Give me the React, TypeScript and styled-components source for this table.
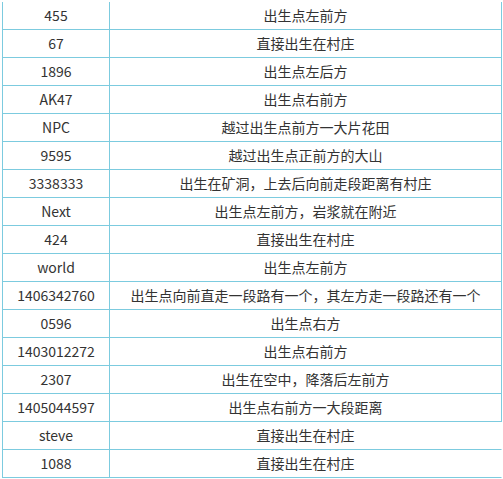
import React from 'react';
import styled, { createGlobalStyle } from 'styled-components';

const GlobalStyle = createGlobalStyle`
  html, body {
    margin: 0;
    padding: 0;
    background: #ffffff;
  }
  body {
    font-family: "Noto Sans CJK SC", "Noto Sans", sans-serif;
  }
`;

const Page = styled.div`
  width: 503px;
  height: 479px;
  padding: 2px 0 0 2px;
  box-sizing: border-box;
  overflow: hidden;
`;

const Table = styled.table`
  border-collapse: separate;
  border-spacing: 0;
  table-layout: fixed;
  width: 500px;
`;

const Cell = styled.td<{ $first?: boolean; $open?: boolean }>`
  height: 27px;
  padding: 0;
  text-align: center;
  vertical-align: middle;
  font-size: 14px;
  line-height: 27px;
  color: #333333;
  white-space: nowrap;
  border-bottom: 1px solid #7ccbdf;
  border-right: 1px solid ${({ $open }) => ($open ? 'transparent' : '#7ccbdf')};
  border-left: ${({ $first }) => ($first ? '1px solid #7ccbdf' : 'none')};
`;

const rows: [string, string][] = [
  ['455', '出生点左前方'],
  ['67', '直接出生在村庄'],
  ['1896', '出生点左后方'],
  ['AK47', '出生点右前方'],
  ['NPC', '越过出生点前方一大片花田'],
  ['9595', '越过出生点正前方的大山'],
  ['3338333', '出生在矿洞，上去后向前走段距离有村庄'],
  ['Next', '出生点左前方，岩浆就在附近'],
  ['424', '直接出生在村庄'],
  ['world', '出生点左前方'],
  ['1406342760', '出生点向前直走一段路有一个，其左方走一段路还有一个'],
  ['0596', '出生点右方'],
  ['1403012272', '出生点右前方'],
  ['2307', '出生在空中，降落后左前方'],
  ['1405044597', '出生点右前方一大段距离'],
  ['steve', '直接出生在村庄'],
  ['1088', '直接出生在村庄'],
];

export default function App() {
  return (
    <>
      <GlobalStyle />
      <Page>
        <Table>
          <colgroup>
            <col style={{ width: '108px' }} />
            <col style={{ width: '392px' }} />
          </colgroup>
          <tbody>
            {rows.map(([seed, place], i) => (
              <tr key={seed}>
                <Cell $first>{seed}</Cell>
                <Cell $open={i >= rows.length - 2}>{place}</Cell>
              </tr>
            ))}
          </tbody>
        </Table>
      </Page>
    </>
  );
}
